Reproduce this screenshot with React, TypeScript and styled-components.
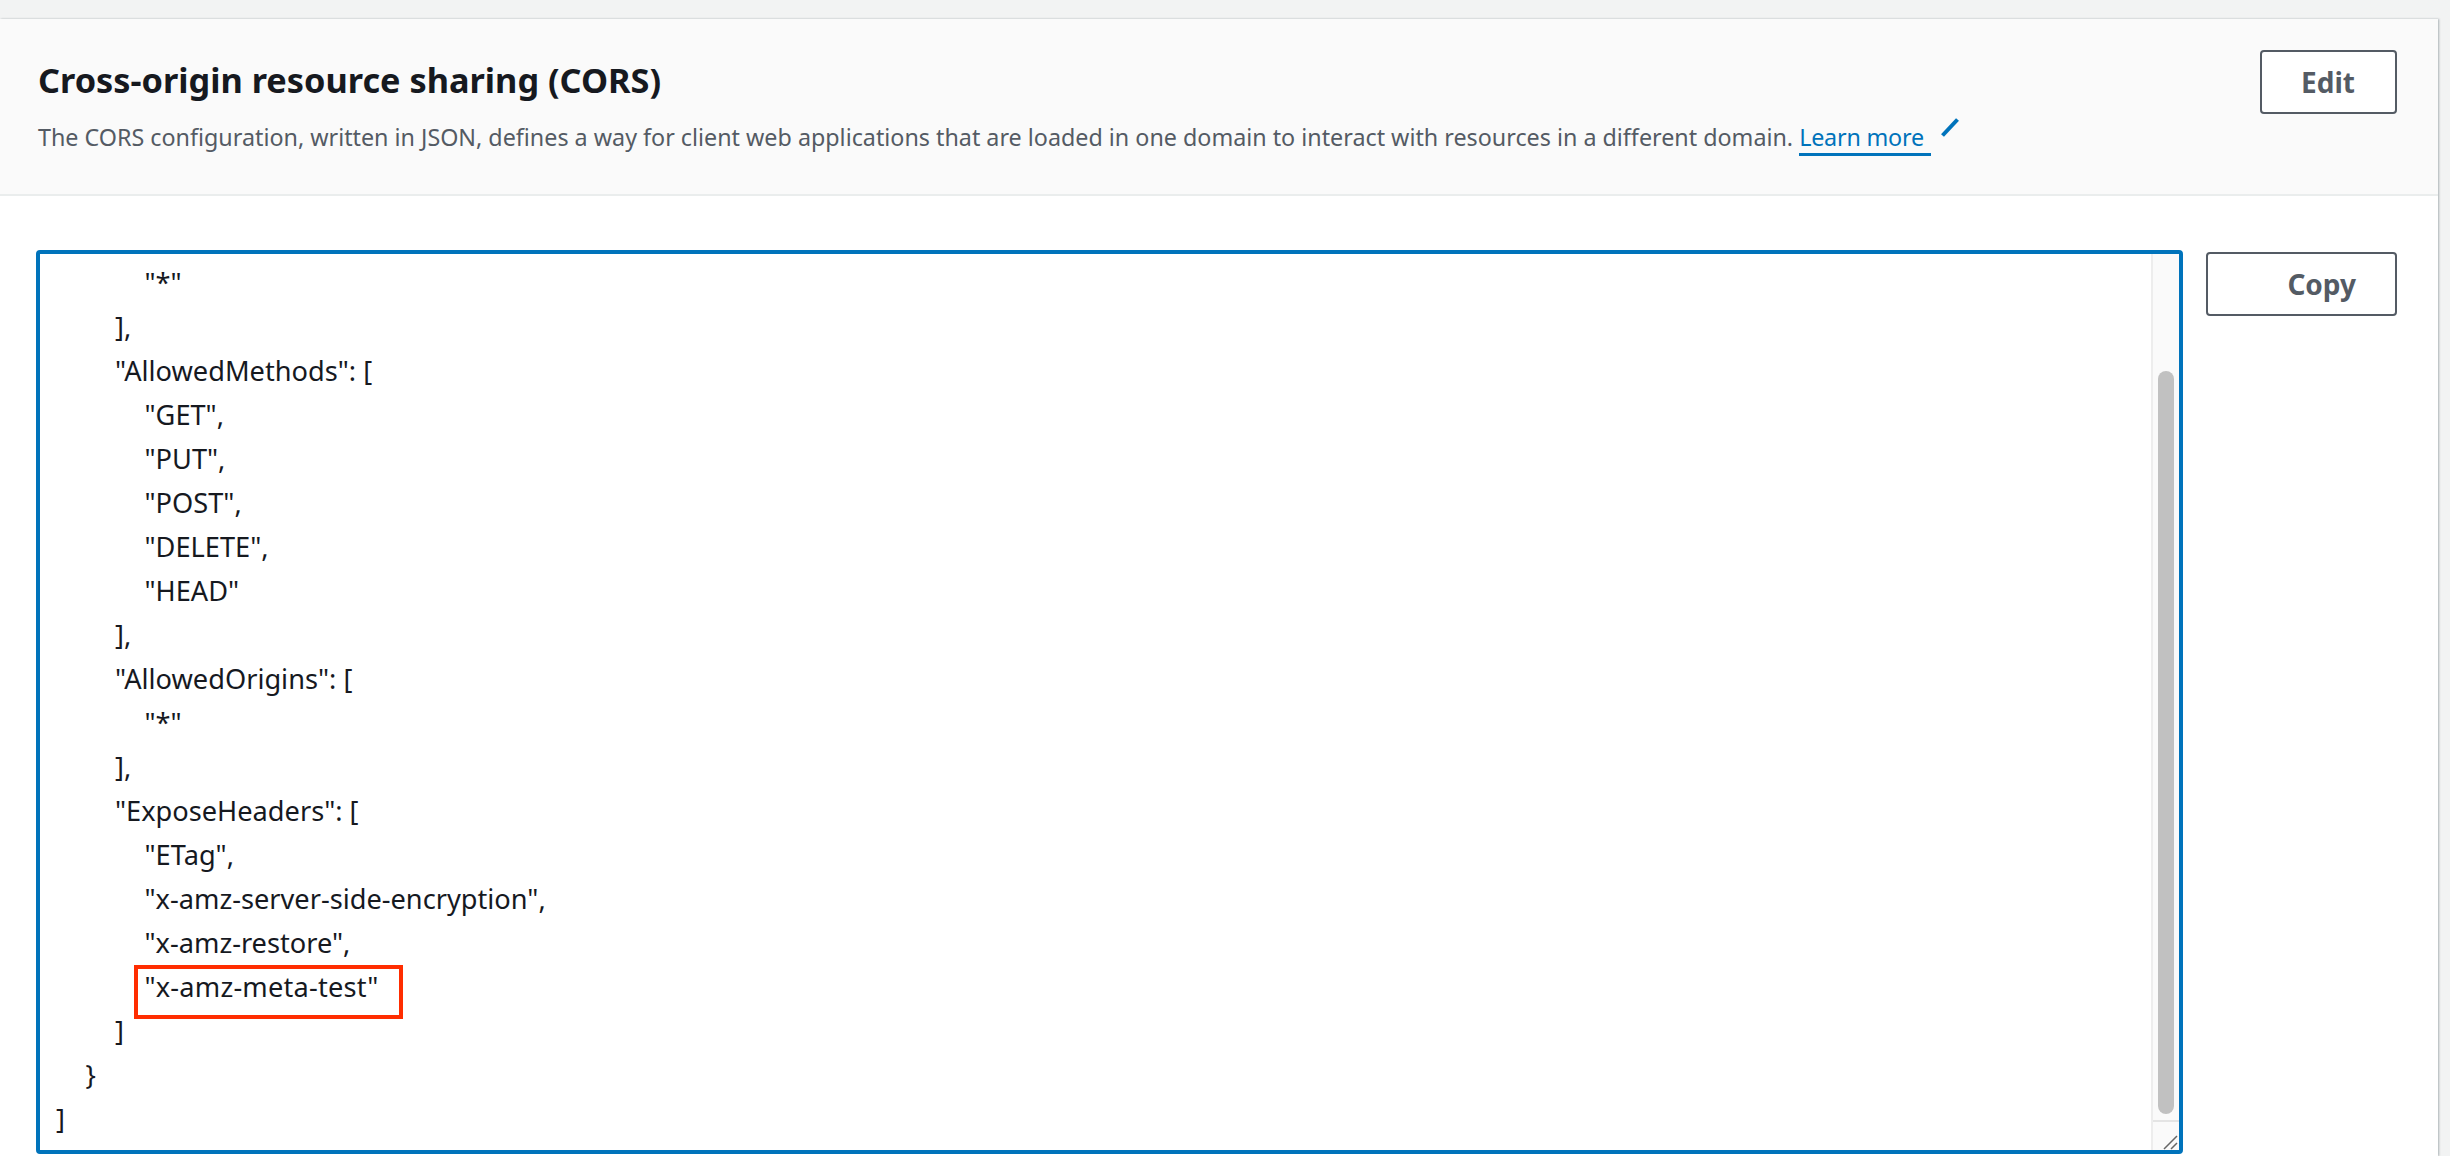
import React from "react";
import styled, { createGlobalStyle } from "styled-components";

const Global = createGlobalStyle`
  html, body { margin: 0; padding: 0; height: 100%; overflow: hidden; background: #f2f3f3; }
  * { box-sizing: border-box; }
  #root { height: 100%; }
`;

const Page = styled.div`
  height: 1156px;
  padding-top: 19px;
  background: #f2f3f3;
  font-family: "Noto Sans", "Open Sans", sans-serif;
`;

const Card = styled.section`
  width: 2438px;
  height: 1137px;
  background: #fff;
  box-shadow: 1px 0 2px rgba(0, 28, 36, 0.3);
  display: flex;
  flex-direction: column;
`;

const Header = styled.header`
  height: 177px;
  flex: none;
  background: #fafafa;
  border-bottom: 2px solid #eaeded;
  padding: 31px 41px 0 38px;
  display: flex;
  justify-content: space-between;
  align-items: flex-start;
`;

const HeaderText = styled.div`
  display: flex;
  flex-direction: column;
  gap: 5px;
`;

const Title = styled.h2`
  margin: 0;
  font-size: 34.3px;
  line-height: 60px;
  font-weight: 700;
  color: #16191f;
`;

const Description = styled.p`
  margin: 0;
  font-size: 23.3px;
  line-height: 44px;
  color: #545b64;
  white-space: nowrap;
`;

const LearnMore = styled.a`
  color: #0073bb;
  letter-spacing: -0.2px;
  padding-right: 7px;
  border-bottom: 3px solid #0073bb;
`;

const PencilIcon = styled.svg`
  width: 18px;
  height: 20px;
  margin-left: 10px;
  vertical-align: 8px;
`;

const Button = styled.button<{ $wide?: boolean }>`
  width: ${(p) => (p.$wide ? "191px" : "137px")};
  height: 64px;
  flex: none;
  margin-top: ${(p) => (p.$wide ? "2px" : "0")};
  border: 2px solid #545b64;
  border-radius: 4px;
  background: #fff;
  color: #545b64;
  font-family: inherit;
  font-size: 28px;
  font-weight: 700;
  line-height: 1;
  padding: 0 ${(p) => (p.$wide ? "39px" : "40px")} 0 0;
  text-align: right;
`;

const Body = styled.div`
  flex: 1;
  padding: 54px 41px 2px 36px;
  display: flex;
  align-items: flex-start;
  gap: 23px;
  min-height: 0;
`;

const CodeBox = styled.div`
  width: 2147px;
  height: 904px;
  flex: none;
  border: 4px solid #0073bb;
  border-radius: 4px;
  background: #fff;
  display: flex;
  overflow: hidden;
`;

const Code = styled.div`
  flex: 1;
  padding: 7px 0 0 16px;
  overflow: hidden;
`;

const Line = styled.div<{ $level: number }>`
  height: 44px;
  font-size: 27.2px;
  line-height: 44px;
  color: #16191f;
  white-space: pre;
  padding-left: ${(p) => p.$level * 29.5}px;
`;

const Marked = styled.span`
  position: relative;
  display: inline-block;
  letter-spacing: 0.2px;
  &::after {
    content: "";
    position: absolute;
    left: -11px;
    right: -24px;
    top: 0;
    bottom: -10px;
    border: 4px solid #ff2d00;
  }
`;

const ScrollColumn = styled.div`
  width: 28px;
  flex: none;
  border-left: 2px solid #ededed;
  background: #fafafa;
  display: flex;
  flex-direction: column;
`;

const Track = styled.div`
  flex: 1;
  padding: 117px 5px 6px 5px;
  display: flex;
`;

const Thumb = styled.div`
  flex: 1;
  border-radius: 8px;
  background: #c1c1c1;
`;

const Corner = styled.div`
  height: 30px;
  flex: none;
  border-top: 2px solid #e4e4e4;
  display: flex;
  align-items: flex-end;
  justify-content: flex-end;
`;

const lines: [number, string][] = [
  [3, '"*"'],
  [2, "],"],
  [2, '"AllowedMethods": ['],
  [3, '"GET",'],
  [3, '"PUT",'],
  [3, '"POST",'],
  [3, '"DELETE",'],
  [3, '"HEAD"'],
  [2, "],"],
  [2, '"AllowedOrigins": ['],
  [3, '"*"'],
  [2, "],"],
  [2, '"ExposeHeaders": ['],
  [3, '"ETag",'],
  [3, '"x-amz-server-side-encryption",'],
  [3, '"x-amz-restore",'],
  [3, '"x-amz-meta-test"'],
  [2, "]"],
  [1, "}"],
  [0, "]"],
];

export default function App() {
  return (
    <Page>
      <Global />
      <Card>
        <Header>
          <HeaderText>
            <Title>Cross-origin resource sharing (CORS)</Title>
            <Description>
              The CORS configuration, written in JSON, defines a way for client web applications that are loaded in one
              domain to interact with resources in a different domain. <LearnMore>Learn more</LearnMore>
              <PencilIcon viewBox="0 0 18 20">
                <path d="M1.5 17.5 L16.5 1.5" stroke="#0073bb" strokeWidth="4" fill="none" />
              </PencilIcon>
            </Description>
          </HeaderText>
          <Button>Edit</Button>
        </Header>
        <Body>
          <CodeBox>
            <Code>
              {lines.map(([level, text], i) => (
                <Line key={i} $level={level}>
                  {text === '"x-amz-meta-test"' ? <Marked>{text}</Marked> : text}
                </Line>
              ))}
            </Code>
            <ScrollColumn>
              <Track>
                <Thumb />
              </Track>
              <Corner>
                <svg width="16" height="16" viewBox="0 0 16 16">
                  <path d="M1 15 L14 2 M8 15 L14 9" stroke="#666" strokeWidth="1.5" fill="none" />
                </svg>
              </Corner>
            </ScrollColumn>
          </CodeBox>
          <Button $wide>Copy</Button>
        </Body>
      </Card>
    </Page>
  );
}
